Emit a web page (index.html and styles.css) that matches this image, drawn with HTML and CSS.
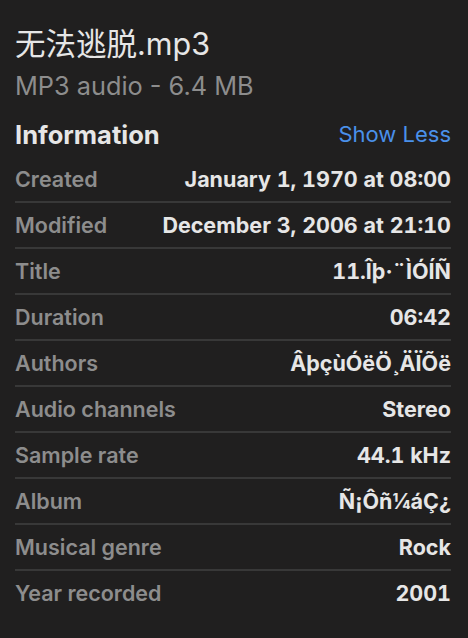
FILE: index.html
```html
<!DOCTYPE html>
<html>
<head>
    <title>无法逃脱.mp3 Info</title>
    <link rel="stylesheet" href="styles.css">
</head>
<body>
    <div class="panel">
        <div class="file-head">
            <div class="file-name">无法逃脱.mp3</div>
            <div class="file-kind">MP3 audio - 6.4 MB</div>
        </div>

        <div class="section-head">
            <h2>Information</h2>
            <a class="toggle" href="#">Show Less</a>
        </div>

        <ul class="info-list">
            <li class="info-row"><span class="label">Created</span><span class="value">January 1, 1970 at 08:00</span></li>
            <li class="info-row"><span class="label">Modified</span><span class="value">December 3, 2006 at 21:10</span></li>
            <li class="info-row"><span class="label">Title</span><span class="value">11.Îþ·¨ÌÓÍÑ</span></li>
            <li class="info-row"><span class="label">Duration</span><span class="value">06:42</span></li>
            <li class="info-row"><span class="label">Authors</span><span class="value">ÂþçùÓëÖ¸ÄÏÕë</span></li>
            <li class="info-row"><span class="label">Audio channels</span><span class="value">Stereo</span></li>
            <li class="info-row"><span class="label">Sample rate</span><span class="value">44.1 kHz</span></li>
            <li class="info-row"><span class="label">Album</span><span class="value">Ñ¡Ôñ¼áÇ¿</span></li>
            <li class="info-row"><span class="label">Musical genre</span><span class="value">Rock</span></li>
            <li class="info-row"><span class="label">Year recorded</span><span class="value">2001</span></li>
        </ul>
    </div>
</body>
</html>
```

FILE: styles.css
```css
:root {
    --background: #201f1f;
    --foreground: #e6e6e6;
    --muted: #8d8d8d;
    --divider: #383838;
    --link: #4a90ea;
}

body {
    margin: 0;
    background: var(--background);
    color: var(--foreground);
    font-family: Inter, "Noto Sans CJK SC", sans-serif;
}

.panel {
    padding: 26px 17px 0 15px;
}

.file-name {
    font-size: 30.5px;
    line-height: 36px;
}

.file-kind {
    font-size: 25.3px;
    line-height: 30px;
    color: var(--muted);
    margin-top: 9px;
}

.section-head {
    display: flex;
    justify-content: space-between;
    align-items: center;
    margin-top: 18px;
    height: 30px;
}

.section-head h2 {
    margin: 0;
    font-size: 25.5px;
    font-weight: 700;
}

.toggle {
    color: var(--link);
    font-size: 22px;
    text-decoration: none;
}

.info-list {
    list-style: none;
    margin: 8px 0 0;
    padding: 0;
}

.info-row {
    display: flex;
    justify-content: space-between;
    align-items: center;
    height: 44px;
    border-bottom: 2px solid var(--divider);
    font-size: 21.5px;
}

.info-row:last-child {
    border-bottom: none;
}

.label {
    color: var(--muted);
    font-weight: 600;
}

.value {
    color: var(--foreground);
    font-weight: 700;
    font-variant-numeric: tabular-nums;
}
```
